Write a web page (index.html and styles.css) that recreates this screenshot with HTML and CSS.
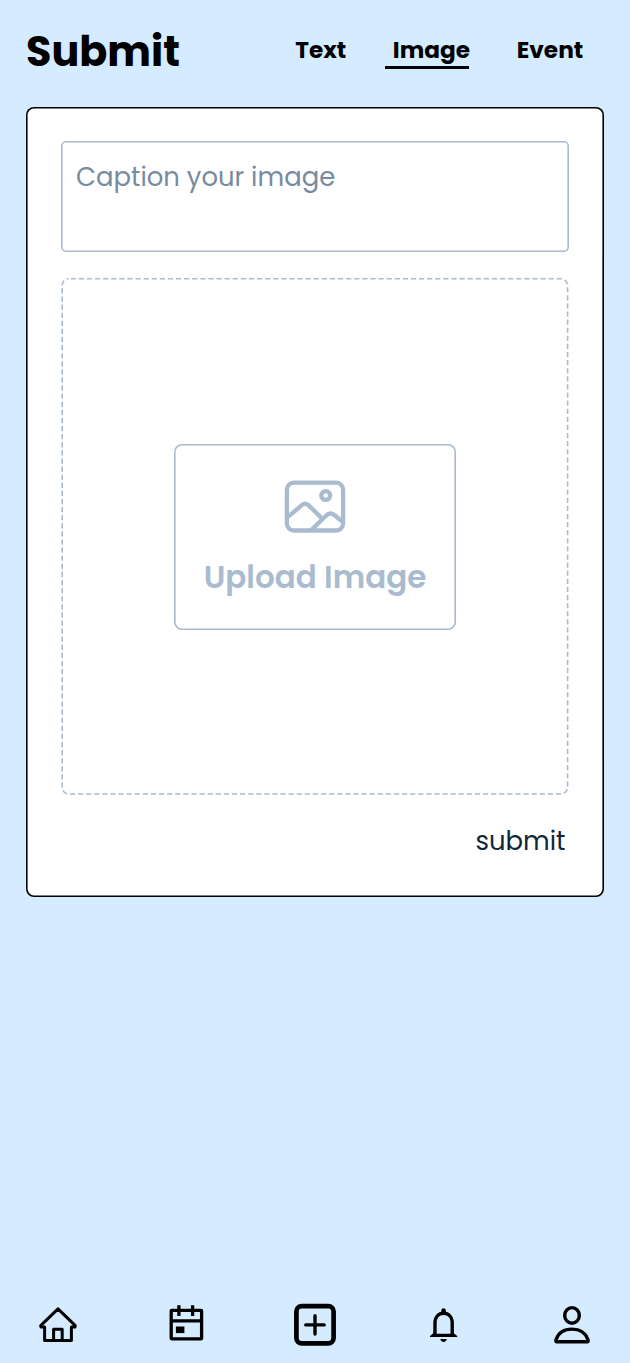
FILE: index.html
```html
<!DOCTYPE html>
<html lang="en">
<head>
<meta charset="utf-8">
<title>Submit</title>
<link rel="stylesheet" href="styles.css">
</head>
<body>
<div class="app">
  <header class="header">
    <h1 class="title">Submit</h1>
    <nav class="tabs">
      <a class="tab tab-text">Text</a>
      <a class="tab tab-image active">Image</a>
      <a class="tab tab-event">Event</a>
    </nav>
  </header>
  <main class="card">
    <div class="caption"><span class="caption-text">Caption your image</span></div>
    <div class="dropzone">
      <svg class="dash" width="508" height="518" viewBox="0 0 508 518"><rect x="1.2" y=".8" width="505.4" height="515.2" rx="6.5" fill="none" stroke="#a9bbce" stroke-width="1.6" stroke-dasharray="5.2 2.9" stroke-dashoffset="-2"/></svg>
      <button class="upload">
        <svg class="picture" width="62" height="54" viewBox="0 0 62 54" fill="none" stroke="#a9bbce" stroke-width="4.3">
          <rect x="2.9" y="2.7" width="56.2" height="47.8" rx="7"/>
          <circle cx="41.7" cy="15.5" r="4.4"/>
          <path d="M2.5 38.2 17.8 25.2Q21.5 22.2 25 25.6L37.5 38M27 50.3 41.7 36Q46 31.6 50.3 35L59 42.2"/>
        </svg>
        <span class="upload-text">Upload Image</span>
      </button>
    </div>
    <a class="submit">submit</a>
  </main>
  <footer class="bottom">
    <svg width="40" height="44" viewBox="0 0 40 44" fill="none" stroke="#000" stroke-width="3" stroke-linejoin="round"><path d="M6.6 37.5V24.1H3.2Q2.3 22.9 3.2 22.1L20 5.8 36.8 22.1Q37.7 22.9 36.8 24.1H33.4V37.5ZM15.6 37.3V26.2H24.2V37.3"/></svg>
    <svg width="40" height="44" viewBox="0 0 40 44" fill="none" stroke="#000" stroke-width="3.3"><rect x="5.2" y="7.3" width="30.4" height="28.6" rx=".7"/><path d="M5.2 17.8H35.6M12.9 2.3V13M26.6 2.3V13"/><path d="M9.9 23.5H18.4V30.1H9.9Z" fill="#000" stroke="none"/></svg>
    <svg width="44" height="44" viewBox="0 0 44 44" fill="none" stroke="#000" stroke-linecap="round"><rect x="3.4" y="3.1" width="37.2" height="37.2" rx="5.3" stroke-width="4.7"/><path d="M22 12.8V31M12.8 21.9H31.2" stroke-width="3.4"/></svg>
    <svg width="40" height="44" viewBox="0 0 40 44"><g transform="translate(-1.4 -.3)"><path d="M11.4 32V20.3C11.4 14 15 10.6 20 10.6S28.6 14 28.6 20.3V32" fill="none" stroke="#000" stroke-width="3.4"/><path d="M16 10.9C17.5 10.2 17.8 9 17.8 7.5C17.8 4.8 22.2 4.8 22.2 7.5C22.2 9 22.5 10.2 24 10.9ZM9.7 29V30.6L6.4 33.3V34.3H33.6V33.3L30.3 30.6V29L28 31H12ZM16.7 36.4H23.3C22.6 40.3 17.4 40.3 16.7 36.4Z"/></g></svg>
    <svg width="40" height="44" viewBox="0 0 40 44" fill="none" stroke="#000" stroke-width="3.4" stroke-linejoin="round"><ellipse cx="20" cy="12.4" rx="7.3" ry="7.8"/><path d="M4.8 38.8C3.3 38.8 3.9 37.5 4.3 36.1 6.8 29.2 12.8 26.1 20 26.1S33.2 29.2 35.7 36.1C36.1 37.5 36.7 38.8 35.2 38.8Z"/></svg>
  </footer>
</div>
</body>
</html>
```
FILE: styles.css
```css
* { box-sizing: border-box; }
body { margin: 0; background: #d5ebff; color: #000; font-family: Poppins, Inter, sans-serif; }
.app { width: 630px; height: 1363px; display: flex; flex-direction: column; padding: 0 26px; }
.header { height: 106.5px; display: flex; align-items: flex-start; justify-content: space-between; flex: none; }
.title { margin: 26px 0 0; font-size: 41.3px; line-height: 52px; font-weight: 700; }
.tabs { display: flex; padding: 35px 12.8px 0 0; }
.tab { height: 34px; padding: 0 8px; font-size: 23.2px; line-height: 30px; font-weight: 700; white-space: nowrap; }
.tab-text { margin-right: 30.6px; }
.tab-image { width: 84px; margin-right: 40px; }
.active { border-bottom: 3px solid #000; }
.card { height: 790px; flex: none; padding: 34px 35px 0; display: flex; flex-direction: column; background: #fff; border-radius: 8px; box-shadow: inset 0 0 0 1.6px #000; }
.caption { height: 111px; padding: 20px 15px; border-radius: 5px; box-shadow: inset 0 0 0 1.6px #a9bbce; font-size: 25.9px; line-height: 32px; color: #778ba0; font-weight: 400; }
.dropzone { position: relative; margin-top: 26.5px; height: 518px; display: flex; align-items: center; justify-content: center; }
.dash { position: absolute; inset: 0; }
.upload { width: 282px; height: 186px; border: 0; border-radius: 8px; box-shadow: inset 0 0 0 1.6px #a9bbce; background: #fff; padding: 36px 0 0; display: flex; flex-direction: column; align-items: center; font: 600 31px/40px Poppins, Inter, sans-serif; color: #a9bbce; }
.upload-text { margin-top: 23px; white-space: nowrap; }
.submit { align-self: flex-end; margin: 28px 3.5px 0 0; font-size: 25.9px; line-height: 34px; color: #12263a; }
.bottom { margin-top: auto; height: 60px; display: flex; justify-content: space-between; padding: 0 12px; align-items: flex-start; }
```
